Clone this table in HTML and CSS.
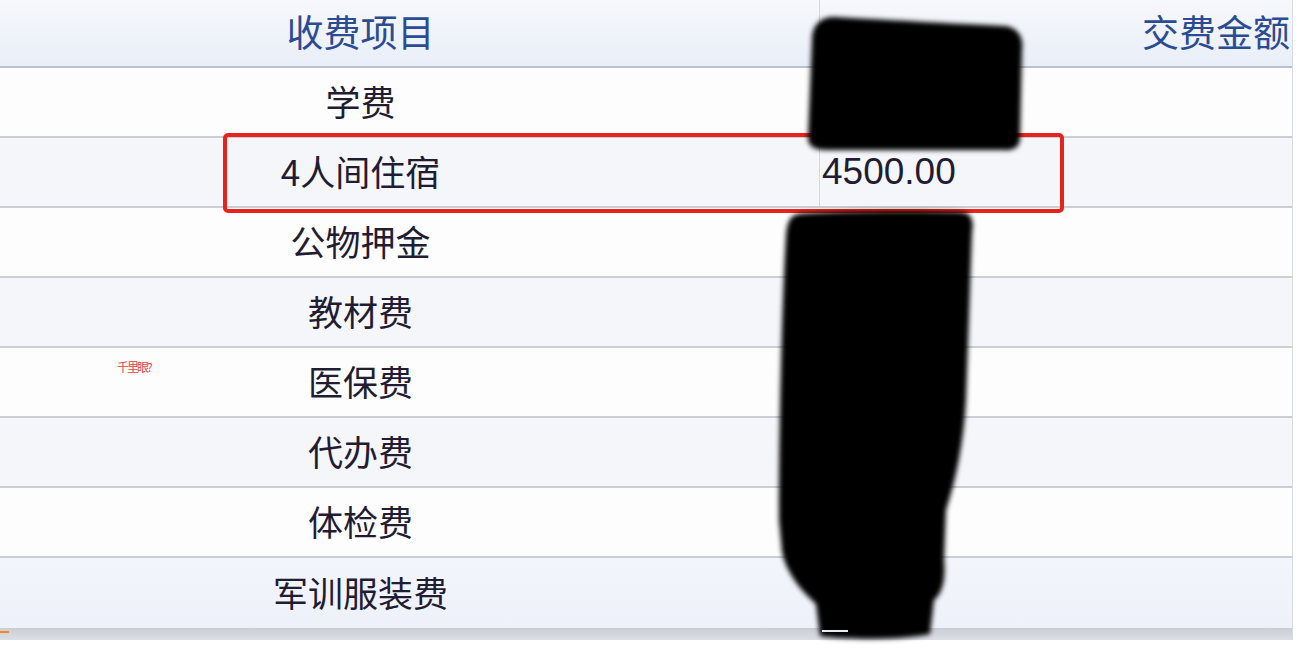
FILE: index.html
```html
<!doctype html>
<html lang="zh-CN">

<head>
  <meta charset="UTF-8">
  <title>收费项目</title>
  <link rel="stylesheet" href="styles.css">
</head>

<body>
  <main id="sheet">
    <section id="fee_table">
      <div class="row head">
        <div class="cell item">收费项目</div>
        <div class="cell amount">交费金额</div>
      </div>
      <div class="row">
        <div class="cell item">学费</div>
        <div class="cell amount"></div>
      </div>
      <div class="row alt marked">
        <div class="cell item">4人间住宿</div>
        <div class="cell amount">4500.00</div>
      </div>
      <div class="row">
        <div class="cell item">公物押金</div>
        <div class="cell amount"></div>
      </div>
      <div class="row alt">
        <div class="cell item">教材费</div>
        <div class="cell amount"></div>
      </div>
      <div class="row">
        <div class="cell item">医保费</div>
        <div class="cell amount"></div>
      </div>
      <div class="row alt">
        <div class="cell item">代办费</div>
        <div class="cell amount"></div>
      </div>
      <div class="row">
        <div class="cell item">体检费</div>
        <div class="cell amount"></div>
      </div>
      <div class="row last">
        <div class="cell item">军训服装费</div>
        <div class="cell amount"></div>
      </div>
      <div class="scroll-bar"><span class="mark"></span></div>
    </section>

    <!-- overlays on top of the screenshot -->
    <div class="highlight"></div>
    <span class="stamp">千里眼?</span>

    <svg id="redaction" viewBox="0 0 1300 648">
      <defs>
        <filter id="soft" x="-10%" y="-10%" width="120%" height="120%">
          <feGaussianBlur stdDeviation="2.5"/>
        </filter>
      </defs>
      <path filter="url(#soft)" fill="#050505" d="M812,40 C812,24 822,16 836,17 C870,19 960,24 1004,26 C1018,27 1024,38 1022,50 L1020,140 C1019,148 1012,151 1004,150 L826,150 C814,150 808,146 808,138 Z"/>
      <path filter="url(#soft)" fill="#050505" d="M798,214 C820,211 930,210 962,212 C972,213 974,222 972,232 L966,400 C964,440 956,480 946,510 L944,560 C946,580 942,594 934,600 L930,634 C900,640 850,640 820,636 L816,604 C800,590 786,572 782,552 L779,520 C779,420 782,300 786,236 C787,222 790,216 798,214 Z"/>
      <path fill="#e9ecf2" d="M822,630 L848,630 L848,632 L822,632 Z"/>
    </svg>
  </main>
</body>
</html>
```

FILE: styles.css
```css
* {
  box-sizing: border-box;
  padding: 0;
  margin: 0;
}

body {
  background-color: #ffffff;
  font-family: "Noto Sans CJK SC", "Liberation Sans", sans-serif;
  width: 1300px;
  height: 648px;
  overflow: hidden;
}

#sheet {
  position: relative;
  width: 1300px;
  height: 648px;
}

#fee_table {
  width: 1293px;
  border-right: 1px solid #d7dbe3;
}

.row {
  display: flex;
  height: 70px;
  border-bottom: 2px solid #c9ced7;
  background-color: #fdfdfe;
}

  .row.alt {
    background-color: #f5f6fa;
  }

  .row.head {
    height: 68px;
    background: linear-gradient(#f6f8fc, #e9eef8);
    border-bottom-color: #b9c1cf;
  }

  .row.last {
    border-bottom: none;
    background: linear-gradient(#f3f5fb, #edf1fa);
  }

.cell {
  display: flex;
  align-items: center;
  color: #221c33;
  font-size: 35px;
}

.cell.item {
  width: 820px;
  padding-right: 98px;
  padding-bottom: 3px;
  justify-content: center;
  border-right: 1px solid transparent;
}

.row.head .cell.item,
.row.marked .cell.item {
  border-right-color: #d3d8e0;
}

.cell.amount {
  flex: 1;
  padding-left: 2px;
  font-family: "Liberation Sans", "Noto Sans CJK SC", sans-serif;
  font-size: 37px;
}

.row.head .cell {
  color: #2b4b93;
  font-size: 37px;
  padding-bottom: 4px;
}

.row.head .cell.amount {
  font-family: "Noto Sans CJK SC", sans-serif;
  justify-content: flex-end;
  padding-right: 2px;
}

.scroll-bar {
  position: relative;
  height: 12px;
  background: linear-gradient(#c9cdd5, #dcdfe5);
}

  .scroll-bar .mark {
    position: absolute;
    left: 0;
    top: 3px;
    width: 9px;
    height: 2px;
    background-color: #f08a28;
  }

.highlight {
  position: absolute;
  left: 223px;
  top: 133px;
  width: 841px;
  height: 80px;
  border: 4px solid #e8231c;
  border-radius: 5px;
}

.stamp {
  position: absolute;
  left: 117px;
  top: 359px;
  font-size: 12px;
  line-height: 16px;
  color: #e0424a;
  letter-spacing: -2px;
}

#redaction {
  position: absolute;
  left: 0;
  top: 0;
  width: 1300px;
  height: 648px;
  pointer-events: none;
}
```
